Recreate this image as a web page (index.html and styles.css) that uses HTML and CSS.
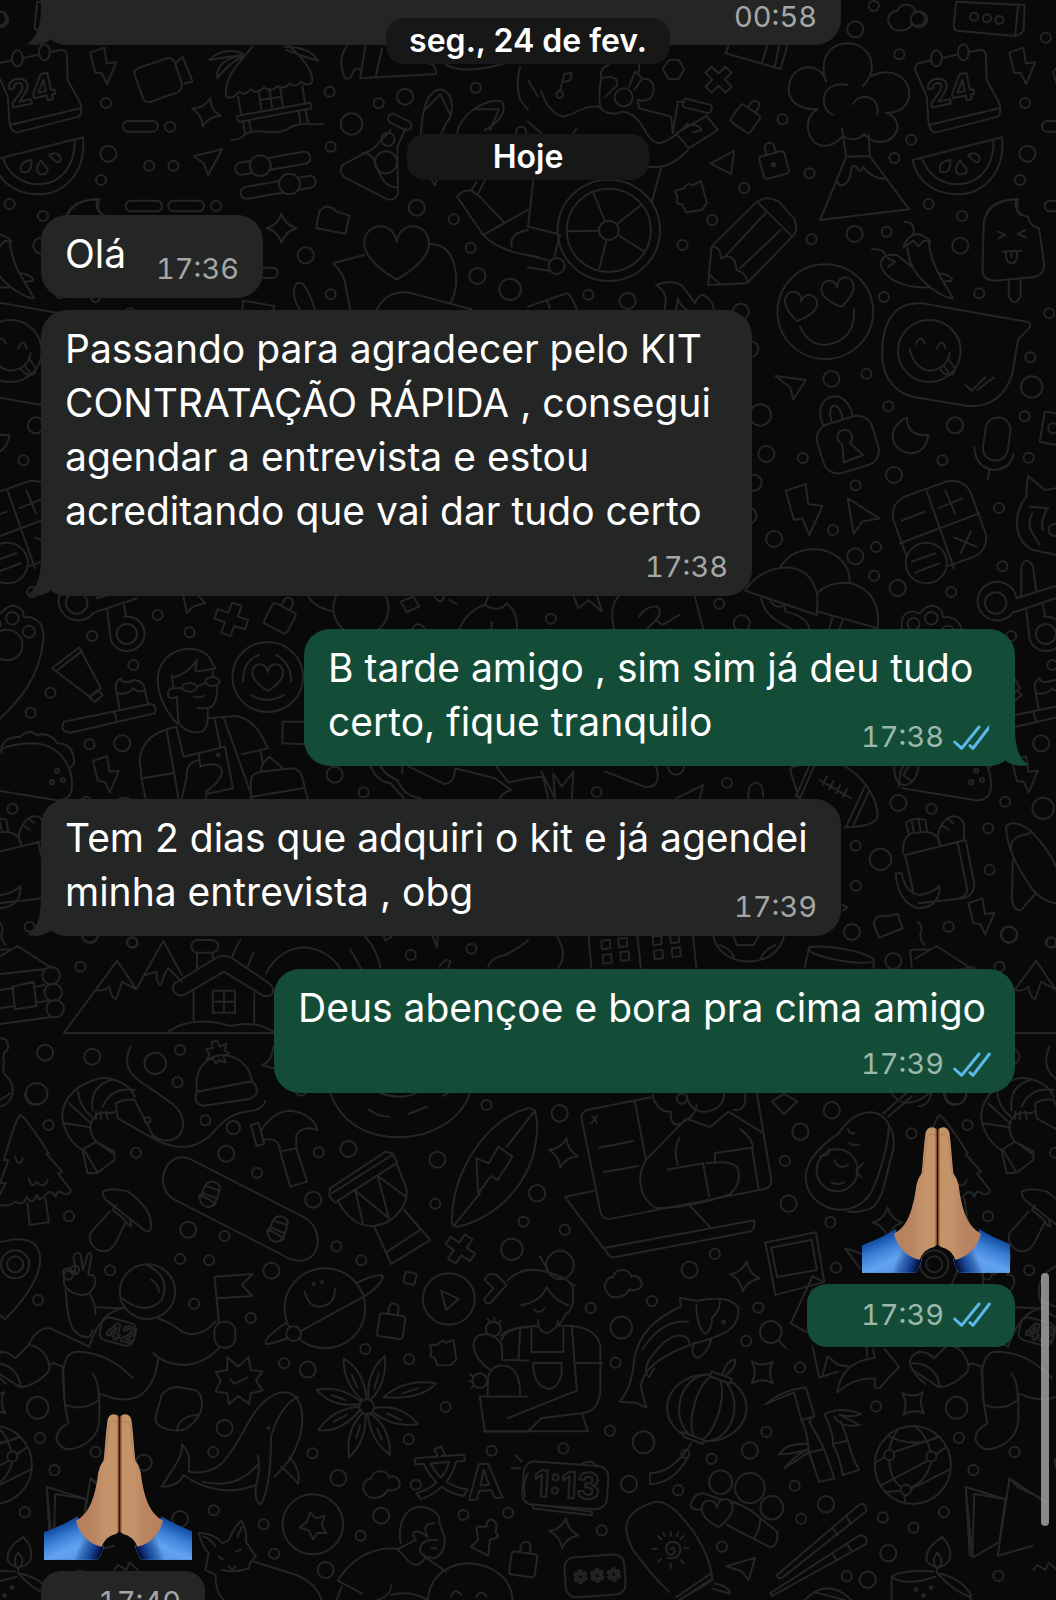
FILE: index.html
```html
<!DOCTYPE html>
<html lang="pt-BR">
<head>
<meta charset="utf-8">
<meta name="viewport" content="width=device-width, initial-scale=1">
<title>Conversa</title>
<link rel="stylesheet" href="styles.css">
</head>
<body>
<svg class="wallpaper" viewBox="0 0 1056 1600" preserveAspectRatio="xMidYMid slice" aria-hidden="true">
  <defs>
    <path id="bolt" d="M268 158L310 143L317 190L345 187L318 252L303 220L283 218Z"/>
    <path id="star" d="M0-44Q10-10 44 0Q10 10 0 44Q-10 10-44 0Q-10-10 0-44Z"/>
    <path id="cross" d="M-13-42h26v29h29v26h-29v29h-26v-29h-29v-26h29z"/>
    <path id="lock" d="M-24-22h48q8 0 8 8v42q0 8-8 8h-48q-8 0-8-8v-42q0-8 8-8M-12-22v-16a12 12 0 0 1 24 0v16"/>
    <path id="cloud" d="M-50 20C-65 0-45-25-28-22C-20-50 25-45 25-18C50-30 65 10 45 18C30 25 20 20 15 18C5 40-40 45-50 20z"/>
    <path id="heart" d="M0 42C-35 20-50 0-45-20C-38-45-5-45 0-15C5-45 38-45 45-20C50 0 35 20 0 42z"/>
    <path id="puzzle" d="M-42-8L-18-18Q-12-38 2-28L22-42L45 12L35 32L-5 44L-18 24Q-38 28-32 8Z"/>
    <path id="folder" d="M-48 8L-40-26L-22-38L0-32L10-22L48-10L36 44L-50 28Z"/>
    <g id="tile">
      <!-- calendar, hut, flask, sliders -->
      <g transform="scale(.3367 .3333)">
        <g class="s"><circle cx="315" cy="309"/><circle cx="505" cy="380"/><circle cx="300" cy="540"/><circle cx="443" cy="497"/><circle cx="515" cy="497"/><circle cx="979" cy="275"/><circle cx="1125" cy="310"/><circle cx="982" cy="440"/><circle cx="1413" cy="263"/><circle cx="642" cy="618"/><circle cx="1348" cy="658"/><circle cx="1398" cy="743"/><circle cx="982" cy="883"/><circle cx="1548" cy="395"/></g>
        <g class="m"><circle cx="322" cy="461"/><circle cx="1203" cy="290"/><circle cx="1238" cy="623"/><circle cx="908" cy="766"/><circle cx="1418" cy="828"/><circle cx="0" cy="58"/></g>
        <g class="l"><circle cx="1044" cy="372"/><circle cx="1515" cy="868"/></g>
        <use href="#bolt"/>
        <path d="M400 225Q395 210 415 203L495 175Q515 172 520 190L540 250Q542 270 525 278L445 306Q430 308 425 295ZM522 190L542 170L572 245L548 250"/>
        <rect x="365" y="363" width="104" height="32" rx="16"/><rect x="373" y="602" width="108" height="32" rx="16"/><rect x="500" y="602" width="106" height="32" rx="16"/>
        <use href="#star" transform="translate(613 337) rotate(15)"/><use href="#star" transform="translate(836 685)"/>
        <path d="M672 290Q665 250 700 200L750 140M855 135Q930 200 928 245Q915 262 895 245Q880 265 860 250Q845 270 825 258Q800 280 785 262Q760 285 745 268Q725 290 710 275Q690 300 672 290M707 290L716 345M898 258L906 310M703 348L922 308L925 325L708 366ZM722 365L728 400M740 362L746 398M888 336L892 368M908 330L914 366M688 420Q715 420 728 402C780 380 800 410 850 390Q880 368 920 372L962 373M768 272L776 328M832 262L840 318M800 266L808 322M772 300L836 290M722 160Q660 140 622 180Q680 170 722 165Q640 180 645 235Q680 190 722 168M845 140Q920 140 945 182Q900 170 850 150"/>
        <path d="M575 468L660 448L618 525L605 490Z"/>
        <rect x="697" y="472" width="226" height="36" rx="18" transform="rotate(-10 809 489)"/><circle class="solid" cx="773" cy="497" r="31"/>
        <rect x="713" y="544" width="226" height="36" rx="18" transform="rotate(-10 826 562)"/><circle class="solid" cx="860" cy="552" r="31"/>
        <rect x="1150" y="352" width="75" height="28" rx="14" transform="rotate(27 1187 366)"/>
        <path d="M1160 390L1110 445L1018 495Q1005 512 1020 530L1150 598Q1175 602 1182 580L1180 440L1205 385M1075 460C1130 450 1110 560 1178 562"/><circle cx="1152" cy="418" r="20"/><circle cx="1146" cy="487" r="33"/>
        <path d="M1250 403C1255 320 1270 270 1310 268C1350 280 1350 340 1325 370L1310 403M1262 330L1308 283L1335 340M1358 403C1360 350 1440 290 1490 305C1510 330 1480 370 1440 390M1410 328L1482 328L1455 390M1282 540L1292 556L1297 540"/>
        <path d="M1030 138Q1000 180 1025 235Q1045 240 1050 212Q1060 200 1070 210M1085 140L1070 235L1295 222Q1295 190 1270 190M1135 145L1115 232M1325 195Q1380 225 1500 190M1545 200Q1530 250 1545 300L1568 330"/>
        <path d="M200 645Q220 600 295 597Q285 630 302 645"/><use href="#folder" transform="translate(990 657)"/>
        <use href="#heart" transform="translate(1178 755) scale(2.1 2)"/>
        <path d="M1080 765L990 790Q1020 820 1025 850L1040 928M1273 732C1340 730 1355 790 1355 850Q1350 890 1338 908M1120 928Q1150 870 1215 878L1400 928M782 803L810 803Q825 805 825 820Q822 834 808 834L782 834M890 928C850 860 890 830 905 860C925 890 930 910 935 928M720 928L722 902L815 918L812 928"/>
        <path d="M1358 590Q1370 570 1400 572L1425 590L1495 665M1358 590L1435 705M1400 572L1415 545M1420 580L1440 543M1435 705Q1490 760 1600 770M1435 705L1568 630M1520 740Q1510 700 1568 690"/>
      </g>
      <g transform="translate(528) scale(.3367 .3333)">
        <g class="s"><circle cx="1027" cy="18"/><circle cx="1103" cy="163"/><circle cx="756" cy="358"/><circle cx="1138" cy="419"/><circle cx="1088" cy="474"/><circle cx="836" cy="520"/><circle cx="642" cy="564"/><circle cx="547" cy="660"/><circle cx="459" cy="735"/><circle cx="842" cy="718"/><circle cx="1065" cy="695"/><circle cx="1190" cy="612"/><circle cx="1289" cy="648"/><circle cx="1057" cy="891"/><circle cx="1340" cy="880"/><circle cx="179" cy="884"/><circle cx="1548" cy="940"/><circle cx="1538" cy="113"/></g>
        <g class="m"><circle cx="972" cy="88"/><circle cx="970" cy="702"/><circle cx="1284" cy="737"/><circle cx="296" cy="903"/><circle cx="632" cy="935"/></g>
        <path d="M1158 190L1340 150Q1358 148 1360 165L1362 240L1400 310Q1408 340 1395 350L1210 398Q1192 392 1190 370L1184 290L1152 215Q1145 198 1158 190M1190 375L1400 325"/>
        <ellipse class="solid" cx="1213" cy="175" rx="16" ry="24"/><ellipse class="solid" cx="1293" cy="157" rx="16" ry="24"/>
        <path d="M1142 480L1408 412C1418 520 1350 585 1270 583C1200 580 1155 540 1142 480ZM1170 475C1190 530 1235 555 1280 553C1340 550 1385 500 1383 420M1255 480Q1215 485 1225 515Q1255 525 1255 480M1283 482Q1262 505 1278 523Q1305 525 1303 508ZM1307 465Q1335 450 1342 478Q1335 500 1307 465"/>
        <circle cx="240" cy="691" r="152"/><circle cx="240" cy="691" r="125"/><circle cx="240" cy="691" r="29"/>
        <path d="M195 580L228 662M335 615L265 672M345 755L268 705M212 805L233 720M118 694L210 692M0 680L90 702M78 770L95 705M0 765L62 782M0 802L62 812M16 540L0 680M395 505L368 605M358 500Q420 510 475 450"/><circle cx="85" cy="798" r="24"/>
        <path d="M95 273L108 222L130 218L126 240L108 246M0 240L30 290M0 365L40 400M135 400L143 386"/><circle cx="94" cy="284" r="10"/>
        <path d="M240 195Q210 205 218 235Q250 225 262 238Q270 260 255 265L230 290M218 235Q205 300 220 330Q250 350 280 335M300 260L318 215L340 235L315 270M330 195V215M340 236Q375 235 373 270Q370 310 325 300L330 325M38 270Q60 340 105 350C140 345 160 315 215 320M285 335C350 350 340 420 390 430Q430 420 475 370M330 325L425 350L430 400L445 305L465 305M440 400L530 348L563 390L478 445ZM470 375Q510 370 515 390L490 398"/><circle cx="284" cy="292" r="27"/>
        <rect x="460" y="305" width="86" height="26" rx="8" transform="rotate(14 503 318)"/>
        <path d="M400 208L418 180H448L464 208L448 237H418Z"/>
        <use href="#cross" transform="translate(566 239) rotate(45)"/>
        <use href="#lock" transform="translate(650 350) rotate(35) scale(1.1)"/><use href="#lock" transform="translate(729 487) rotate(-15) scale(1.2)"/><circle cx="729" cy="494" r="5"/>
        <path d="M595 138L587 160L750 207L770 138M710 138L695 188M745 140L733 200M543 490L612 453L603 522L570 505Z"/>
        <path d="M885 245C860 160 910 130 950 130C1010 130 1050 200 995 258M1020 228C1080 200 1135 230 1132 290Q1120 340 1062 338Q1100 350 1097 390Q1080 430 1035 425Q1010 420 1000 402Q970 430 935 408Q910 440 875 437C825 430 815 350 860 328C790 330 770 290 775 260C780 200 850 180 880 230M905 345C860 320 870 240 950 255M965 312Q975 290 1005 290Q1045 300 1037 345M932 385L945 470L1015 468L1012 405M945 470L868 660L1132 628L1015 468M918 545Q925 565 945 550C970 520 950 490 975 500Q985 525 995 500Q1020 535 1060 537"/>
        <use href="#cloud" transform="translate(1125 55)"/>
        <path d="M1272 5L1475 15L1472 90Q1460 110 1440 107L1275 92Q1262 90 1265 70ZM1455 20L1447 105"/><circle cx="1325" cy="50" r="12"/><circle cx="1363" cy="55" r="12"/><circle cx="1400" cy="60" r="12"/>
        <use href="#puzzle" transform="translate(482 588) rotate(8) scale(1.15)"/>
        <path d="M535 855L545 740L680 605Q710 585 745 605L790 655Q805 690 785 710L650 850ZM680 605L785 710M545 740Q575 740 572 775Q615 755 620 810Q650 820 652 848M585 770L705 640M630 805L750 690M540 825L570 852"/>
        <path d="M1115 742Q1130 700 1160 703Q1185 710 1195 725L1175 722L1160 740L1145 722ZM1190 722C1195 800 1240 850 1262 895C1220 890 1130 830 1128 745M1117 665Q1150 665 1145 700M1140 800L1095 765Q1050 760 1047 795C1060 840 1120 865 1190 862M1022 748Q1055 745 1062 765M1070 775L1090 785L1070 800M1225 820Q1265 830 1258 842L1235 845"/>
        <path d="M1450 598Q1355 600 1353 680L1350 810Q1350 840 1385 842L1500 832Q1535 825 1533 795L1518 685Q1490 680 1485 650Q1440 640 1450 598M1428 842V888Q1445 925 1463 888V838M1397 695L1417 705L1397 715M1478 690L1455 702L1478 712M1410 755L1465 752M1420 755Q1418 790 1437 790Q1455 790 1452 753M1436 755v16"/>
        <use href="#heart" transform="translate(808 920) rotate(12) scale(1.05)"/><use href="#heart" transform="translate(922 877) rotate(-12) scale(1.05)"/>
        <path d="M380 855Q430 835 460 860Q490 900 495 910Q505 885 520 885Q550 900 552 928M380 855Q420 880 405 928M440 928L445 895Q455 920 470 928M0 920L115 880Q125 880 145 928M55 900L65 925"/>
      </g>
      <!-- faces, padlock, calculator, bowls -->
      <g transform="translate(528 300) scale(.3367 .3333)">
        <g class="s"><circle cx="1005" cy="221"/><circle cx="1070" cy="319"/><circle cx="816" cy="474"/><circle cx="1231" cy="481"/><circle cx="973" cy="556"/><circle cx="906" cy="690"/><circle cx="1034" cy="741"/><circle cx="1028" cy="827"/><circle cx="1399" cy="624"/><circle cx="1409" cy="799"/><circle cx="1257" cy="876"/><circle cx="1492" cy="172"/><circle cx="1475" cy="349"/><circle cx="1487" cy="473"/><circle cx="568" cy="911"/><circle cx="68" cy="956"/><circle cx="1435" cy="1008"/></g>
        <g class="m"><circle cx="901" cy="237"/><circle cx="1268" cy="376"/><circle cx="1087" cy="525"/><circle cx="972" cy="769"/><circle cx="1098" cy="864"/><circle cx="731" cy="717"/><circle cx="708" cy="462"/><circle cx="635" cy="970"/><circle cx="660" cy="147"/><circle cx="670" cy="548"/><circle cx="655" cy="647"/></g>
        <g class="l"><circle cx="690" cy="345"/><circle cx="1496" cy="261"/></g>
        <circle cx="883" cy="35" r="142"/><path d="M808 80Q830 135 885 135Q975 120 968 25"/>
        <path d="M1170 10L1480 65Q1495 68 1490 82L1455 120Q1445 180 1440 215C1420 290 1370 325 1300 317L1140 290C1070 270 1050 210 1052 150C1055 60 1090 5 1170 10"/><circle cx="1192" cy="153" r="93"/>
        <path d="M1133 148Q1150 210 1195 212Q1245 205 1252 160M1152 132Q1165 100 1178 130M1215 145Q1230 110 1240 145M1222 205Q1240 235 1265 220L1268 205L1250 180M1236 198L1250 218M1300 255L1318 272L1358 232M1335 270L1384 232"/>
        <path d="M735 228L825 240L788 298L778 262ZM876 375Q866 350 868 330C880 270 950 275 965 348M903 368Q890 330 905 318Q925 310 935 358"/>
        <rect x="865" y="358" width="170" height="152" rx="45" transform="rotate(-17 950 434)"/>
        <path d="M933 432L938 487L995 465L955 428A22 22 0 1 0 933 432"/>
        <path d="M1125 352Q1125 410 1190 405Q1180 460 1135 460C1070 450 1065 380 1125 352M1325 440Q1330 505 1385 510Q1435 505 1442 462M1370 512L1366 538"/><rect x="1355" y="352" width="74" height="130" rx="37" transform="rotate(8 1392 418)"/>
        <path d="M765 572L825 552L832 612L875 618L835 705L815 655L790 660ZM950 595L1043 655L992 665L967 702Z"/>
        <rect x="1100" y="560" width="244" height="240" rx="60" transform="rotate(-20 1222 680)"/>
        <path d="M1183 570L1265 805M1105 730L1340 640M1218 625L1290 595M1240 572L1268 640M1110 662L1180 635M1265 712L1332 740M1315 695L1285 760"/><circle class="solid" cx="1183" cy="789" r="61"/><path d="M1140 785L1210 760M1150 818L1222 790"/>
        <path d="M750 800Q780 750 850 747C920 750 960 800 955 850M645 872C690 790 850 760 860 900L858 945ZM858 880Q900 840 960 850C1030 870 1045 930 1038 985L862 935M693 895Q700 950 780 985M720 905Q740 930 760 915L765 935Q830 950 835 985M905 950L895 985M935 960L925 985"/>
        <circle cx="1389" cy="909" r="32"/><path d="M1450 890A58 58 0 1 0 1440 938L1568 895M1450 895L1568 858M1480 930L1490 1020A52 52 0 1 0 1530 950M1530 915L1535 950M1465 888V800Q1480 765 1500 800L1510 876"/><circle cx="1538" cy="1002" r="30"/>
        <path d="M1112 1000Q1100 930 1150 935Q1160 945 1168 935Q1200 900 1230 935Q1230 960 1245 950Q1295 960 1290 1020C1280 1130 1220 1200 1160 1258M1112 1000Q1080 1100 1160 1258"/><circle cx="1198" cy="955" r="19"/><circle cx="1145" cy="972" r="18"/><circle cx="1247" cy="995" r="18"/><circle cx="1182" cy="1035" r="46"/>
        <path d="M1485 528L1535 570L1568 565M1485 528Q1480 560 1480 590C1440 640 1440 720 1500 750L1568 765M1490 620L1545 625M1498 640Q1480 670 1498 700L1520 735M1540 630Q1520 670 1530 690M1535 335L1568 340M1535 335L1520 425L1568 435"/><circle cx="1564" cy="690" r="18"/><circle cx="1560" cy="385" r="15"/>
        <path d="M135 888L150 925L180 900L220 935L205 888M255 985Q240 920 270 888M330 950Q350 915 385 920Q400 940 380 960L355 985M380 960L400 975L450 945M495 888L520 985"/>
      </g>
      <g transform="translate(0 300) scale(.3367 .3333)">
        <g class="s"><circle cx="468" cy="945"/><circle cx="563" cy="997"/><circle cx="396" cy="1095"/><circle cx="150" cy="1178"/></g>
        <path d="M545 888L555 940Q570 915 610 910L590 888M915 888Q930 920 990 935M1190 905L1228 890L1245 920L1208 936ZM1365 985Q1390 930 1440 915L1450 890M1440 915Q1480 940 1505 910Q1540 940 1535 985M1460 965v20M1225 985Q1240 960 1262 985M1290 888Q1310 920 1320 888M1335 900L1355 912"/><circle cx="1072" cy="925" r="82"/>
        <use href="#cross" transform="translate(687 958) rotate(20) scale(1.15)"/><use href="#lock" transform="translate(835 948) rotate(28) scale(1.2)"/>
      </g>
      <!-- woman with phone, taco, picnic bag -->
      <g transform="translate(0 600) scale(.3367 .3333)">
        <g class="s"><circle cx="91" cy="338"/><circle cx="266" cy="433"/><circle cx="37" cy="626"/><circle cx="1080" cy="577"/><circle cx="394" cy="1028"/><circle cx="239" cy="1100"/><circle cx="88" cy="980"/><circle cx="1220" cy="1065"/><circle cx="1400" cy="1046"/></g>
        <g class="m"><circle cx="363" cy="430"/><circle cx="994" cy="524"/><circle cx="268" cy="1005"/></g>
        <path d="M155 205L235 142L300 265L268 292ZM165 215L245 152M265 292L290 270L305 285L282 306ZM355 325L345 270Q340 245 358 235Q362 255 400 240Q430 245 430 270L440 315M348 280Q380 285 395 265Q410 280 432 270M190 365L445 312Q468 315 460 340L210 398Q175 395 190 365M340 335L348 366"/>
        <path d="M525 370C480 320 460 260 472 210C500 140 580 130 620 170L640 205Q600 215 580 212L585 180Q560 220 510 235M510 225L515 265Q495 265 500 290Q510 300 525 290L530 370Q560 405 600 395Q620 385 617 325Q645 320 645 260M632 215V232M515 265H542M585 260L610 248M575 290Q590 295 605 288M587 325H617"/><ellipse cx="563" cy="262" rx="22" ry="13"/><ellipse cx="631" cy="245" rx="21" ry="13"/>
        <path d="M525 380Q420 400 415 480L420 535L432 595M495 390L530 595M425 535L512 520M525 385L545 470L590 460M617 355L700 348Q760 355 795 445L718 463M665 355L750 595M638 360L655 440M590 460L668 440L692 565L612 582M590 460L595 500Q650 480 660 515Q655 545 612 575V595M590 480Q550 490 555 530L540 595"/><circle cx="648" cy="465" r="4"/>
        <circle cx="795" cy="231" r="105"/><use href="#heart" x="795" y="231"/><path d="M722 245Q722 180 770 165M820 165Q865 190 865 245M745 285Q790 315 845 285"/>
        <path d="M905 365H840L838 430L905 433M745 595V545Q745 520 775 515L870 505Q895 510 900 540L913 595M750 590L900 565M775 515Q775 490 800 470L840 505M775 455L780 490"/>
        <path d="M5 440Q15 410 60 410Q85 385 110 405Q150 395 170 430Q220 430 220 490L210 502M-60 560Q-60 430 100 430C180 435 220 500 213 570Q205 605 165 600L-50 565M5 440V460"/><circle cx="170" cy="512" r="6"/><circle cx="155" cy="547" r="6"/><circle cx="187" cy="540" r="6"/>
        <use href="#bolt" x="8" y="325"/>
        <path d="M1100 498Q1120 545 1160 550L1200 595M1130 500Q1150 530 1180 540Q1200 590 1250 595M1195 500V520M1215 500L1320 552Q1350 550 1352 505L1470 535L1518 570Q1490 580 1485 595M1475 500L1510 548L1568 535"/>
        <path d="M1140 1010L1145 1022L1165 1008M1285 1008L1298 1044L1300 1008M1085 1010Q1120 1050 1130 1103"/>
      </g>
      <g transform="translate(528 600) scale(.3367 .3333)">
        <g class="s"><circle cx="591" cy="548"/><circle cx="204" cy="576"/><circle cx="1417" cy="605"/><circle cx="1367" cy="685"/><circle cx="973" cy="737"/><circle cx="1371" cy="809"/><circle cx="974" cy="857"/><circle cx="1553" cy="1027"/></g>
        <g class="m"><circle cx="1100" cy="609"/><circle cx="1428" cy="1003"/><circle cx="962" cy="996"/><circle cx="1085" cy="1083"/><circle cx="440" cy="500"/></g>
        <g class="l"><circle cx="1047" cy="778"/><circle cx="1530" cy="625"/></g>
        <path d="M1120 765L1300 720L1325 850Q1325 890 1290 895L1160 910M1120 765L1145 880M1275 725L1305 870Q1300 890 1280 895M1115 762Q1110 710 1140 700L1180 695Q1220 700 1225 735M1130 700L1122 668Q1150 650 1180 660L1185 692M1140 665l6 32M1160 660l6 32M1225 735Q1205 710 1235 665Q1270 630 1295 670V722M1230 675l20 15M1245 655l18 14M1092 820H1110Q1120 880 1165 885Q1200 880 1222 858Q1225 920 1160 925Q1100 910 1092 820"/>
        <path d="M780 515Q775 500 800 498M780 515L805 595M940 498C1010 540 1040 610 1038 650Q1030 680 940 682M850 498L808 595M835 498L795 590M1000 560L945 680M1012 575L965 680M865 540L960 595M875 555l12-25M895 568l12-25M915 580l12-25M935 592l12-25"/>
        <use href="#bolt" x="1040" y="752"/><use href="#folder" transform="translate(1067 970) rotate(-32) scale(.85)"/>
        <path d="M1158 965Q1175 980 1165 1005Q1165 1020 1177 1035M1420 680Q1440 655 1490 690C1540 740 1560 780 1568 800M1420 680Q1420 760 1500 870Q1530 905 1568 910M1435 750Q1430 710 1475 705L1490 700M1440 780L1437 900Q1445 935 1465 930L1508 880"/>
        <path d="M180 1008L188 1103M325 1008L335 1103M490 1008L500 1103M218 1022l25-3 2 26-25 3zM268 1016l25-3 2 26-25 3zM222 1065l25-3 2 26-25 3zM274 1057l25-3 2 26-25 3zM370 1010l25-3 2 26-25 3zM422 1004l25-3 2 26-25 3zM374 1052l25-3 2 26-25 3zM427 1045l25-3 2 26-25 3zM550 1008C570 1110 740 1110 760 1008M610 1008L620 1035H670L685 1008M570 1035Q610 1050 612 1078M690 1078Q700 1050 735 1035M822 1103L835 1040M1028 1085L1025 1103M85 1008Q120 1060 90 1103M1140 1103L1135 1050L1190 1048M935 915L950 923L935 932"/><ellipse cx="930" cy="1064" rx="98" ry="18" transform="rotate(10 930 1064)"/>
        <path d="M0 535L45 530L60 595M40 515L80 595M80 595L75 520L100 560L135 515L130 595M230 515L350 562Q390 560 385 520L380 500M440 595L520 555L510 595M655 595Q650 550 680 548Q700 555 698 590M1088 498Q1085 540 1110 555Q1150 560 1160 500M1130 500L1115 525L1140 545"/>
      </g>
      <!-- mountains, snowboard, astronaut, planet -->
      <g transform="translate(0 940) scale(.3367 .3333)">
        <g class="s"><circle cx="535" cy="330"/><circle cx="527" cy="427"/><circle cx="610" cy="541"/><circle cx="144" cy="555"/><circle cx="404" cy="638"/><circle cx="205" cy="829"/><circle cx="763" cy="698"/><circle cx="947" cy="637"/><circle cx="667" cy="888"/><circle cx="535" cy="957"/><circle cx="621" cy="961"/><circle cx="327" cy="991"/><circle cx="577" cy="1091"/><circle cx="113" cy="1080"/><circle cx="745" cy="1134"/><circle cx="999" cy="919"/><circle cx="1073" cy="961"/><circle cx="1293" cy="791"/><circle cx="1445" cy="495"/><circle cx="1085" cy="1227"/><circle cx="1215" cy="1258"/><circle cx="844" cy="1270"/><circle cx="1555" cy="845"/></g>
        <g class="m"><circle cx="134" cy="338"/><circle cx="274" cy="350"/><circle cx="672" cy="641"/><circle cx="1035" cy="627"/><circle cx="1299" cy="659"/><circle cx="930" cy="779"/><circle cx="559" cy="869"/><circle cx="806" cy="992"/><circle cx="914" cy="1289"/></g>
        <g class="l"><circle cx="461" cy="370"/><circle cx="109" cy="461"/><circle cx="1520" cy="928"/></g>
        <path d="M-10 55L52 18L155 85M-20 104L130 88M0 150L40 145M105 140L132 135M0 205L45 198M0 252L150 232M37 140L100 125L108 198L45 208ZM105 188L140 183M0 295Q30 295 22 330Q5 340 12 370Q5 400 20 410Q50 440 30 480Q15 500 0 498"/><circle cx="152" cy="107" r="26"/><circle cx="158" cy="157" r="26"/><circle cx="164" cy="206" r="26"/>
        <path d="M815 279H190L348 62L405 148L485 2L540 105M285 150Q310 155 325 140Q330 175 345 178Q355 150 362 125L405 148M432 105L465 95Q465 135 478 135Q488 100 500 85L540 125"/>
        <path d="M518 130L640 55Q665 40 690 55L800 130Q820 150 805 165Q790 175 770 160L665 95L555 160Q530 175 518 155Q508 145 518 130ZM575 155V240M755 160V250M632 152h66v66h-66zM665 152v66M632 185h66M585 38V85M632 38V55M500 275Q570 225 685 258Q760 240 812 275"/><rect x="568" y="0" width="80" height="38" rx="19"/>
        <path d="M690 50Q700 20 715 0M735 80L752 40M790 100Q830 25 905 22Q975 30 1010 85M1040 28L1072 85M1305 80Q1325 50 1338 65L1330 85M1450 80Q1460 50 1500 45Q1550 20 1568 0"/>
        <path d="M388 320C360 380 390 410 440 440L510 490C560 530 550 590 510 600Q480 605 460 590M400 480L460 598L350 535Q345 515 345 490Q370 475 400 480M400 470C380 420 310 405 280 420C190 450 170 520 195 570Q210 610 245 630L285 605Q260 570 272 545Q285 510 330 520L345 515M400 450Q330 440 305 500M330 420Q265 440 275 510M232 455Q235 500 272 530M205 490L270 550M190 550L270 562M245 630L260 700L290 698L340 660V635L285 605M250 630L290 698M285 605L335 640M285 515v22M300 515v22M315 515l5 22M460 598C540 640 600 620 640 570Q680 520 730 515Q785 510 788 482"/><circle cx="438" cy="540" r="9"/><circle cx="693" cy="563" r="20"/>
        <path d="M585 455C575 380 620 345 665 345C720 350 745 390 748 425M585 455L740 425Q765 425 762 460Q755 475 735 478L605 497Q580 495 580 470ZM645 302l8 18 20-10-6 22 15 8-18 8 6 20-20-8-8 12-8-16-20 4 8-18-10-14 20-4-4-18zM812 320Q808 365 778 375L812 385"/>
        <path d="M60 525Q75 530 145 640L138 642L185 695L172 700L210 750Q210 765 190 762Q170 745 165 770Q150 745 135 765Q115 790 110 765Q95 800 80 770Q70 800 45 785Q30 800 10 795L-20 798M60 525Q45 540 12 660L25 660L0 730L18 730L-20 798M82 790L88 855L145 847L135 775M45 650Q55 685 68 655M85 715Q95 750 108 725Q130 750 142 720"/>
        <path d="M305 755Q330 740 380 755C430 790 455 830 447 870Q440 880 425 868L325 788Q305 775 305 755M345 795L335 810L345 818Q375 840 380 855L390 860L385 835M325 815L268 880Q260 910 290 930Q325 945 345 905L372 850"/>
        <path d="M580 665L900 830C960 860 960 960 890 962Q860 962 830 940L520 780C460 750 480 650 545 652Q565 655 580 665"/>
        <path id="binding" d="M600 770Q605 720 635 725Q660 735 650 755Q640 800 620 802Q595 800 592 770ZM612 738L652 752M605 760L645 776M602 768L640 790M590 768L600 760M632 798L642 792"/><use href="#binding" x="202" y="104"/>
        <path d="M745 555L768 548L785 612L762 618ZM775 572Q810 515 860 512C910 515 935 545 943 570Q900 555 880 585V625L832 635Q830 590 785 600M832 635L862 740L912 725L880 625"/>
        <path d="M980 745L1145 635L1165 640L1180 668L995 788L978 768ZM985 760L1165 645M1005 785C1040 850 1080 860 1110 858C1180 850 1220 780 1205 740L1178 672M1055 752L1078 850M1055 752L1155 835L1122 708L1205 770M1112 860L1162 972L1278 900L1200 810M1150 935L1250 868"/>
        <path d="M980 460C1020 560 1100 592 1190 592C1280 590 1370 540 1395 460M1095 508Q1120 530 1155 530M1212 522L1270 500M1130 460Q1190 480 1235 460M1315 468L1330 460M880 460Q893 475 908 460"/>
        <path d="M1568 505C1440 540 1340 700 1342 850Q1350 865 1370 858C1500 820 1595 700 1595 560Q1595 500 1568 505M1350 855L1425 760M1590 510L1505 620M1415 655L1452 670L1480 620L1522 650L1478 720L1458 708L1420 760Z"/>
        <use href="#cross" transform="translate(1367 927) rotate(35) scale(1.05)"/>
        <path d="M-10 910Q60 885 100 910C140 950 120 1030 15 1138L-30 1100M-220 925L-175 985M-220 925L-160 945"/><circle cx="45" cy="973" r="42"/><circle cx="45" cy="973" r="24"/>
        <path d="M190 1010Q180 985 205 985L225 1000L218 950Q228 930 240 945L246 990L262 940Q275 935 270 960L262 1005Q285 1000 283 1030Q270 1070 240 1065Q200 1060 190 1030ZM195 1050C200 1140 210 1190 260 1192Q270 1190 275 1170M265 1060Q285 1090 283 1122"/><circle cx="203" cy="1006" r="13"/><circle cx="222" cy="990" r="13"/>
        <circle cx="438" cy="1055" r="82"/><path d="M362 1075Q430 1130 480 1080Q510 1010 435 975M448 1018Q470 1030 472 1055M285 1102Q330 1105 370 1105Q300 1110 265 1220L150 1165Q110 1160 85 1215L45 1255Q20 1230 0 1238M470 1135Q520 1155 540 1175Q590 1200 640 1145M85 1215Q130 1220 145 1270Q150 1290 140 1300Q100 1340 60 1342L-20 1290M-20 1270Q50 1270 62 1340M145 1275L160 1270L185 1280M190 1380L188 1290Q195 1235 230 1235Q320 1235 395 1315M275 1300Q295 1330 293 1380M455 1240Q490 1275 550 1275Q610 1270 655 1220M470 1255Q460 1340 410 1370Q360 1390 300 1362M650 1145L637 1010L750 1002L718 1035L750 1068L645 1075"/>
        <rect x="298" y="1140" width="104" height="70" rx="22" transform="rotate(15 350 1175)"/><rect x="637" y="1145" width="62" height="78" rx="28"/>
        <circle cx="965" cy="1105" r="120"/><path d="M1060 1028Q1130 995 1138 1010Q1130 1040 1080 1070L880 1180M848 1150Q780 1195 790 1212Q800 1215 855 1195M905 1055Q915 1100 950 1100Q995 1095 995 1048"/><circle class="solid" cx="872" cy="1181" r="22"/><circle cx="932" cy="1032" r="3"/><circle cx="956" cy="1027" r="3"/>
        <rect x="1201" y="998" width="34" height="34" rx="6" transform="rotate(12 1218 1014)"/><circle cx="1333" cy="1077" r="77"/><path d="M1310 1052L1362 1077L1325 1110ZM1440 1020Q1450 995 1475 1005L1505 1035L1455 1090Q1435 1090 1440 1075L1465 1045Z"/>
        <use href="#lock" transform="translate(1163 1150) rotate(8) scale(1.2)"/><use href="#puzzle" transform="translate(1315 1235) rotate(15)"/>
        <circle cx="1465" cy="1167" r="22"/><circle cx="1425" cy="1322" r="22"/><path d="M1455 1145l-6-8M1468 1143v-10M1480 1150l8-8M1405 1310l-8-6M1402 1325h-8M1408 1338l-8 6M1455 1290C1400 1250 1395 1200 1425 1185Q1470 1175 1490 1215L1492 1260L1568 1262M1490 1200Q1500 1165 1568 1162M1545 1165L1540 1260M1448 1365L1450 1310Q1460 1275 1495 1277Q1545 1280 1545 1365M1440 1475L1425 1370H1568M1440 1475H1568"/>
        <path d="M675 1252L708 1280L738 1252L745 1290L780 1295L760 1322L780 1352L745 1360L740 1392L708 1368L680 1392L675 1360L640 1355L655 1322L640 1297L675 1290ZM685 1318l10 14 38-18"/>
      </g>
      <!-- laptop, avocado, koi, lantern, globe -->
      <g transform="translate(528 1060) scale(.3367 .3444)">
        <g class="s"><circle cx="109" cy="493"/><circle cx="555" cy="563"/><circle cx="368" cy="700"/><circle cx="186" cy="720"/><circle cx="260" cy="879"/><circle cx="243" cy="1076"/><circle cx="105" cy="1128"/><circle cx="763" cy="293"/><circle cx="898" cy="471"/><circle cx="915" cy="603"/><circle cx="684" cy="719"/><circle cx="648" cy="816"/><circle cx="808" cy="893"/><circle cx="1034" cy="1006"/><circle cx="708" cy="1080"/><circle cx="545" cy="1158"/><circle cx="446" cy="1249"/><circle cx="792" cy="1236"/><circle cx="811" cy="1332"/><circle cx="1054" cy="1328"/><circle cx="1145" cy="1358"/><circle cx="1235" cy="1313"/><circle cx="1280" cy="1097"/><circle cx="1323" cy="1191"/><circle cx="1445" cy="1138"/><circle cx="1397" cy="1498"/><circle cx="947" cy="1499"/><circle cx="576" cy="1413"/><circle cx="219" cy="1366"/><circle cx="1139" cy="213"/></g>
        <g class="m"><circle cx="94" cy="155"/><circle cx="480" cy="609"/><circle cx="27" cy="387"/><circle cx="300" cy="1231"/><circle cx="659" cy="1134"/><circle cx="885" cy="1290"/><circle cx="1070" cy="1432"/><circle cx="1009" cy="1509"/><circle cx="809" cy="208"/><circle cx="774" cy="417"/><circle cx="902" cy="146"/></g>
        <g class="l"><circle cx="277" cy="777"/><circle cx="343" cy="1110"/><circle cx="1273" cy="1010"/></g>
        <path d="M365 108L175 145Q155 155 160 175L215 440Q220 462 240 462L700 375Q725 370 722 345L680 98M318 122L350 290M190 162l14 20M206 160l-18 24M210 255L312 235M225 325L328 308M195 380L110 398L235 560Q240 575 260 572L660 498Q675 490 672 465L230 545M480 422L540 485"/>
        <path d="M470 170L350 290C320 340 330 400 380 430M450 225Q430 260 445 305M415 318L520 300L538 395M380 430Q480 430 600 390Q640 350 620 310Q600 290 530 300M555 300V270L665 255L685 375M630 200Q670 230 668 260M470 170L540 195L595 150L695 210M370 100Q380 150 425 150Q420 185 445 188Q500 165 500 130M470 100Q480 150 525 150Q580 145 583 98M610 145Q650 150 645 98"/><circle cx="457" cy="112" r="15"/>
        <path d="M1010 152C960 160 940 190 920 215C850 260 820 310 825 350C830 400 880 435 930 435C1010 430 1030 370 1045 320Q1070 250 1072 190Q1055 150 1010 152M1072 190Q1090 210 1085 260C1060 340 1060 400 1020 430Q980 445 950 440M900 355Q920 365 938 355M910 290Q920 320 950 305M950 200Q955 215 970 213M955 240Q960 250 985 245M868 280L890 275L895 258M975 320L995 300M975 325L990 340M1055 155L1125 95M1070 165L1140 105M1080 98Q1120 150 1190 98M1235 98Q1240 130 1270 130Q1300 125 1302 98"/><circle cx="918" cy="320" r="61"/>
        <path d="M705 530L855 500L880 645L735 682ZM722 545L842 522L858 610L740 630ZM725 120L760 98L800 120L760 158ZM880 645L845 628L780 765L828 790M845 665L830 700M845 830L865 922L920 905M875 915L890 860L920 885L950 890M918 965Q970 920 1030 925V950Q1035 955 1045 952L1102 890L1060 840M918 965C930 890 980 870 1030 865L1025 840M1005 835L1008 860"/>
        <use href="#star" transform="translate(105 270) rotate(12)"/><use href="#star" transform="translate(644 628) rotate(8)"/><use href="#star" transform="translate(1068 472)"/><use href="#star" transform="translate(696 907) rotate(45)"/><use href="#star" transform="translate(1144 997) rotate(42)"/><use href="#star" transform="translate(107 1374) rotate(8)"/><use href="#cloud" transform="translate(283 650) rotate(-5)"/>
        <path d="M450 690L500 700Q600 680 625 720C630 790 560 800 540 810C420 840 340 890 335 950L352 1010L320 995L272 992Q310 950 315 870C330 790 380 750 455 715ZM500 710C500 750 510 790 530 795Q550 770 545 750Q570 730 570 700M495 820Q480 850 500 865Q530 860 545 808M475 760Q400 750 340 840M375 895L360 920Q340 910 360 870Q410 800 450 800Q475 800 480 822"/><circle cx="581" cy="761" r="4"/>
        <circle cx="95" cy="595" r="41"/><path d="M35 570L60 610M-60 640Q-20 600 40 612Q100 625 130 650Q145 720 110 740Q100 765 85 770M55 660Q40 700-20 712M55 660Q80 700 120 712M20 725Q35 740 50 720M125 650L140 656M30 755V770Q50 815 88 770V755M90 772Q200 765 215 830V950Q215 1020 160 1025L40 1040L0 1078H178L160 1025M10 775V848H105V778M130 775L145 960L-60 1040M145 880H220M15 880H100V910Q90 955 60 955Q15 945 15 880M-130 1078H0M30 772Q-60 775-80 800"/>
        <circle cx="721" cy="790" r="32"/><path d="M745 815L768 838"/>
        <ellipse cx="531" cy="1010" rx="118" ry="97"/><ellipse cx="531" cy="1010" rx="82" ry="97" transform="rotate(8 531 1010)"/><ellipse cx="531" cy="1010" rx="38" ry="97" transform="rotate(16 531 1010)"/>
        <path class="solid" d="M540 918L600 940L605 925L545 904ZM458 1080L525 1105L520 1115L462 1094Z"/><path d="M578 912Q590 870 615 870Q620 890 588 915M485 1112L470 1135Q420 1200 362 1200V1232Q430 1230 475 1155"/><circle cx="467" cy="1144" r="12"/>
        <path d="M705 1000Q750 960 825 950L850 1030L835 1050Q860 1090 880 1130L910 1215L865 1225L835 1140Q830 1080 812 1045Q800 1000 790 965ZM812 1045L850 1035M832 1140L880 1130M745 1145Q770 1110 832 1115M745 1145Q790 1145 832 1130Q790 1150 762 1185L832 1140M880 1028Q930 1005 988 1028Q960 1040 925 1030L985 1060Q930 1070 910 1035M880 1028Q910 1090 905 1115Q925 1150 935 1205L983 1190Q960 1150 950 1105L930 1050M905 1115L950 1105"/>
        <circle cx="1143" cy="1176" r="113"/><path d="M1070 1092Q1150 1130 1220 1092M1030 1170L1060 1152M1086 1138L1220 1095M1073 1160Q1075 1220 1110 1240M1048 1235L1185 1165M1212 1145L1240 1125M1198 1165Q1185 1220 1135 1243M1110 1250L1060 1255M1138 1245L1250 1190M1150 1064Q1185 1090 1195 1138M1100 1070Q1075 1110 1073 1132M1118 1262L1120 1288"/><circle class="solid" cx="1073" cy="1147" r="15"/><circle class="solid" cx="1198" cy="1151" r="15"/><circle class="solid" cx="1122" cy="1248" r="15"/>
        <path d="M1165 845Q1130 860 1135 885Q1150 920 1180 940M1300 1240L1418 1275L1400 1400L1320 1445ZM1325 1260L1418 1275M1300 1240L1312 1440M1325 1260L1320 1445M1430 1215L1395 1440L1500 1410M1430 1215L1545 1290M1430 1215L1455 1240L1540 1280"/>
        <path d="M1230 1385Q1265 1420 1250 1455Q1215 1490 1185 1455Q1175 1420 1230 1385M1215 1430Q1240 1455 1215 1478Q1195 1455 1215 1430M1215 1475V1490Q1260 1540 1315 1560M1215 1490Q1280 1500 1315 1550V1568M1080 1500Q1110 1480 1205 1485M1080 1500V1568M1080 1500Q1120 1530 1210 1500"/><circle cx="1152" cy="1538" r="4"/><circle cx="1197" cy="1532" r="4"/><circle cx="1175" cy="1555" r="4"/>
        <rect x="-15" y="1172" width="252" height="126" rx="32" transform="rotate(4 110 1235)"/><path d="M15 1290L190 1312V1322L15 1302ZM155 1175Q190 1155 205 1182"/>
        <path d="M300 1330Q320 1300 370 1285Q400 1275 440 1310C500 1370 540 1440 548 1510L450 1568M300 1330Q280 1360 310 1420Q370 1500 420 1545M440 1560L545 1490M450 1568L548 1505M555 1520Q600 1530 600 1550L548 1535M424 1420q8-10 12 4q-4 18-20 10q-14-20 6-34q34-4 30 28q-10 24-36 18M424 1370v12M424 1462v14M370 1420h12M464 1418h12M386 1382l9 9M454 1452l9 9M462 1382l-9 9M386 1458l9-9M402 1372l4 10M446 1372l-4 10"/>
        <circle cx="572" cy="1226" r="34"/><circle cx="659" cy="1243" r="44"/><circle cx="724" cy="1300" r="34"/><path d="M530 1305Q480 1310 483 1290Q490 1260 520 1258L570 1275Q640 1285 690 1330L740 1370Q745 1410 720 1415L590 1350M690 1330Q690 1365 670 1390"/><use class="solid" href="#heart" x="563" y="1315" transform="rotate(-5 563 1315)"/>
        <path d="M590 1470L675 1445L655 1510L635 1485ZM740 1495L985 1290Q1005 1285 1005 1310L755 1503Q742 1508 740 1495ZM720 1548L985 1380Q1010 1380 1005 1405L725 1556ZM905 1360l15 20M945 1325l15 22M905 1435l12 18M948 1405l12 20M822 1568Q890 1500 960 1568M850 1545L940 1568"/>
        <rect x="110" y="1440" width="178" height="116" rx="30" transform="rotate(-4 198 1497)"/>
      </g>
      <!-- whale, anise, coin, fox, diver -->
      <g transform="translate(0 1340) scale(.3367 .3333)">
        <g class="s"><circle cx="633" cy="336"/><circle cx="635" cy="511"/><circle cx="783" cy="553"/><circle cx="814" cy="641"/><circle cx="1071" cy="587"/><circle cx="1376" cy="525"/><circle cx="1235" cy="434"/><circle cx="1214" cy="298"/><circle cx="1323" cy="201"/><circle cx="1460" cy="332"/><circle cx="1509" cy="518"/><circle cx="928" cy="340"/></g>
        <g class="m"><circle cx="667" cy="264"/><circle cx="1005" cy="414"/><circle cx="1132" cy="527"/><circle cx="967" cy="690"/><circle cx="535" cy="537"/><circle cx="427" cy="368"/></g>
        <path d="M185 80L193 195L203 250Q165 270 168 300Q180 330 210 328Q290 310 295 240V160M193 195Q250 215 293 180M480 165Q500 140 530 142L580 150Q600 160 600 195Q600 230 555 265Q530 280 480 262Q455 250 465 220ZM525 272Q530 230 585 225"/>
        <path d="M480 440L515 385Q545 340 540 312Q570 340 560 395C650 410 680 350 720 280C760 200 800 155 850 157C910 170 905 260 880 320Q860 370 815 410M480 440Q530 440 545 405C620 460 700 460 760 435M600 425Q700 450 765 375M765 345Q775 380 760 440Q755 490 775 492Q805 440 805 290Q830 200 885 170M835 380Q870 410 885 432Q895 390 860 352"/><circle cx="797" cy="264" r="3"/>
        <circle cx="1089" cy="200" r="22"/><path d="M1075 180Q1020 130 1020 55Q1080 90 1088 175M1095 178Q1085 100 1143 48Q1150 130 1100 180M1140 172Q1200 115 1295 130Q1250 180 1140 172M1110 205Q1190 190 1240 252Q1170 265 1105 215M1098 220Q1160 260 1158 345Q1100 300 1092 222M1085 222Q1090 300 1037 352Q1025 270 1078 218M1070 210Q1010 280 945 270Q990 205 1068 200M1068 192Q990 205 940 150Q1010 135 1072 185M1045 105L1062 145M1125 100L1112 145M1195 160L1240 145M1150 220L1190 240M1120 265L1135 300M1070 255L1058 295M1030 225L990 245M985 165L1025 180"/>
        <circle cx="929" cy="553" r="90"/><path d="M921 517L938 535L965 528L955 555L970 580L942 578L930 598L918 572L890 562L912 545Z"/>
        <path d="M590 578Q640 580 660 610L680 600Q695 560 718 542Q735 580 730 605L760 650Q740 665 740 685Q700 700 660 690M590 578Q600 620 620 640L610 690L640 705Q640 760 665 780M755 665L880 705Q940 730 955 780M605 590Q630 600 640 620M705 590Q715 570 718 560M650 650l12 8M700 635l16-6M680 680q10 15 20 0"/>
        <path d="M1003 722L1075 760M1003 722Q1060 630 1160 625L1185 628M1000 780L1015 740M1120 780Q1160 770 1162 735M1162 765Q1220 750 1270 780M1190 610C1180 560 1200 500 1250 500Q1310 510 1305 550L1320 590Q1325 640 1290 655L1265 650Q1240 690 1215 665L1180 628L1235 600M1235 600Q1215 570 1245 575L1270 590Q1250 550 1290 550M1275 600Q1240 610 1250 640L1265 650M1300 600L1275 600M1280 625h16M1268 655L1325 695M1270 780C1280 690 1350 670 1395 670C1470 675 1520 720 1522 780M1340 770Q1350 740 1370 765M1415 770Q1430 745 1445 770"/>
        <path d="M1445 560Q1445 535 1465 540Q1480 550 1472 575L1480 590L1455 600L1450 648L1398 620L1420 600L1415 560Z"/><use href="#lock" transform="translate(1555 665) rotate(8) scale(1.2)"/><use href="#cloud" transform="translate(1133 434) rotate(-8)"/>
        <path d="M340 690L350 675L375 690L385 668L410 690M1520 385H1545M1530 345L1550 365M1568 400Q1550 430 1560 470"/>
      </g>
      <text x="930" y="108" font-size="37" transform="rotate(-12 930 108)">24</text>
      <text x="105" y="1337" font-size="22" transform="rotate(14 105 1337)">42</text>
      <text x="533" y="1496" font-size="36" transform="rotate(3 533 1496)">1:13</text>
      <text x="573" y="1593" font-size="30" transform="rotate(-4 573 1593)">***</text>
      <text x="415" y="1495" font-size="54" transform="rotate(-4 415 1495)">文</text>
      <text x="468" y="1500" font-size="48" transform="rotate(-4 468 1500)">A</text>
    </g>
  </defs>
  <use href="#tile"/>
  <use href="#tile" x="-919"/>
  <use href="#tile" x="919"/>
</svg>

<svg class="sprite" width="0" height="0" aria-hidden="true">
  <defs>
    <linearGradient id="skin" gradientUnits="userSpaceOnUse" x1="165" y1="0" x2="292" y2="0">
      <stop offset="0" stop-color="#b8805a"/><stop offset=".4" stop-color="#b98562"/><stop offset=".65" stop-color="#c4936a"/><stop offset=".93" stop-color="#c49468"/><stop offset=".97" stop-color="#8f6040"/><stop offset="1" stop-color="#2b140c"/>
    </linearGradient>
    <linearGradient id="sleeve" gradientUnits="userSpaceOnUse" x1="110" y1="385" x2="150" y2="475">
      <stop offset="0" stop-color="#0f4a9f"/><stop offset=".4" stop-color="#3b80d6"/><stop offset=".8" stop-color="#62a3ef"/><stop offset="1" stop-color="#5c9ceb"/>
    </linearGradient>
    <linearGradient id="cuff" gradientUnits="userSpaceOnUse" x1="168" y1="450" x2="232" y2="475">
      <stop offset="0" stop-color="#04184f" stop-opacity="0"/><stop offset=".5" stop-color="#0c3d92" stop-opacity=".75"/><stop offset="1" stop-color="#020d38"/>
    </linearGradient>
    <g id="palm">
      <path id="arm" fill="url(#sleeve)" d="M66 406Q115 388 150 368L166 358C175 400 200 435 245 446Q240 472 226 489H60V406Z"/>
      <use href="#arm" fill="none"/>
      <path fill="url(#cuff)" d="M150 368L166 358C175 400 200 435 245 446Q240 472 226 489H150Z"/>
      <path fill="url(#skin)" d="M292 404V60Q286 51 273 51Q260 53 256 68C250 110 249 150 244 190Q232 205 228 226C224 262 215 305 200 332Q185 359 161 372C168 400 190 440 238 450Q246 427 268 416Q284 412 292 404Z"/>
      <path fill="none" stroke="#9d6648" stroke-width="2" stroke-opacity=".7" d="M258 92Q262 72 275 72Q288 72 290 84M258 92Q256 140 247 192"/>
    </g>
    <symbol id="pray" viewBox="66 50 443 440">
      <use href="#palm"/><use href="#palm" transform="translate(584) scale(-1 1)"/>
    </symbol>
    <symbol id="read" viewBox="0 0 114 75">
      <path d="M5 51L26 70L78 6M51 62L60 70L109 6" fill="none" stroke="#5ab9ea" stroke-width="9" stroke-linecap="round" stroke-linejoin="round"/>
    </symbol>
    <symbol id="tail" viewBox="0 0 40 40">
      <path d="M14 0C14 20 11 32 0 39C10 41 19 39 24 34L40 20V0Z" fill="currentColor"/>
    </symbol>
  </defs>
</svg>

<main class="chat">
  <div class="day day--floating"><span>seg., 24 de fev.</span></div>

  <article class="bubble bubble--in bubble--cut w-800"><time class="meta">00:58</time><svg class="tail"><use href="#tail"/></svg></article>

  <div class="day"><span>Hoje</span></div>

  <article class="bubble bubble--in bubble--first w-222"><p>Olá</p><time class="meta">17:36</time></article>

  <article class="bubble bubble--in bubble--tall bubble--next w-711">
    <p>Passando para agradecer pelo KIT<br>CONTRATAÇÃO RÁPIDA , consegui<br>agendar a entrevista e estou<br>acreditando que vai dar tudo certo</p>
    <time class="meta">17:38</time>
    <svg class="tail"><use href="#tail"/></svg>
  </article>

  <article class="bubble bubble--out w-711">
    <p>B tarde amigo , sim sim já deu tudo<br>certo, fique tranquilo</p>
    <div class="meta"><time>17:38</time><svg class="ticks" role="img" aria-label="Lida"><use href="#read"/></svg></div>
    <svg class="tail"><use href="#tail"/></svg>
  </article>

  <article class="bubble bubble--in w-800">
    <p>Tem 2 dias que adquiri o kit e já agendei<br>minha entrevista , obg</p>
    <time class="meta">17:39</time>
    <svg class="tail"><use href="#tail"/></svg>
  </article>

  <article class="bubble bubble--out bubble--tall w-741">
    <p>Deus abençoe e bora pra cima amigo</p>
    <div class="meta"><time>17:39</time><svg class="ticks" role="img" aria-label="Lida"><use href="#read"/></svg></div>
  </article>

  <article class="reaction reaction--out">
    <svg class="emoji" role="img" aria-label="Mãos em oração"><use href="#pray"/></svg>
    <div class="stamp"><time>17:39</time><svg class="ticks" role="img" aria-label="Lida"><use href="#read"/></svg></div>
  </article>

  <article class="reaction reaction--in">
    <svg class="emoji" role="img" aria-label="Mãos em oração"><use href="#pray"/></svg>
    <div class="stamp"><time>17:40</time></div>
  </article>

  <div class="scrollbar" aria-hidden="true"></div>
</main>
</body>
</html>
```
FILE: styles.css
```css
* { box-sizing: border-box; }

body {
  margin: 0;
  height: 100vh;
  overflow: hidden;
  position: relative;
  background: #090909;
  color: #fff;
  font-family: Inter, "Liberation Sans", sans-serif;
}

.wallpaper {
  position: absolute;
  inset: 0;
  width: 100%;
  height: 100%;
  fill: none;
  stroke: #242525;
  stroke-width: 2;
  stroke-linecap: round;
  stroke-linejoin: round;
}
.wallpaper * { vector-effect: non-scaling-stroke; }
.wallpaper .solid { fill: #090909; }
.wallpaper .s circle { r: 15px; }
.wallpaper .m circle { r: 24px; }
.wallpaper .l circle { r: 32px; }
.wallpaper text {
  font-family: Inter, "Noto Sans CJK SC", sans-serif;
  font-weight: 700;
}

.sprite { position: absolute; }

.chat {
  position: relative;
  display: flex;
  flex-direction: column;
  height: 100%;
  padding: 0 41px;
}
.chat > * { flex-shrink: 0; }

.day {
  display: flex;
  justify-content: center;
  margin: 89px 0 35px;
  font-size: 32px;
  font-weight: 600;
  line-height: 46px;
}
.day span {
  min-width: 242px;
  padding: 0 23px;
  border-radius: 18px;
  background: #171717;
  text-align: center;
}
.day--floating {
  position: absolute;
  top: 18px;
  left: 0;
  right: 0;
  z-index: 1;
  margin: 0;
}

.bubble {
  position: relative;
  display: grid;
  max-width: 100%;
  margin-top: 33px;
  padding: 12px 24px 12px;
  border-radius: 26px;
}
.bubble > p,
.bubble > .meta { grid-area: 1 / 1; }
.bubble p {
  margin: 0;
  padding-bottom: 5px;
  font-size: 39px;
  line-height: 54px;
  white-space: nowrap;
}
.bubble--tall p { padding-bottom: 46px; }
.bubble--in { align-self: flex-start; background: #242626; color: #fff; }
.bubble--out { align-self: flex-end; background: #144d37; }
.bubble--cut {
  height: 45px;
  margin-top: 0;
  padding-top: 0;
  border-top-left-radius: 0;
  border-top-right-radius: 0;
}
.bubble--first { margin-top: 0; }
.bubble--next { margin-top: 12px; }

.w-222 { width: 222px; }
.w-711 { width: 711px; }
.w-741 { width: 741px; }
.w-800 { width: 800px; }

.meta {
  align-self: end;
  justify-self: end;
}
.meta, .stamp {
  display: flex;
  align-items: center;
  gap: 9px;
  color: #a5a7a7;
  font-size: 29px;
  font-variant-numeric: tabular-nums;
  line-height: 34px;
}
.bubble--out .meta,
.reaction--out .stamp { color: #9bb8ad; }

.ticks {
  width: 38px;
  height: 25px;
}

.tail {
  position: absolute;
  left: -14px;
  bottom: 0;
  width: 40px;
  height: 40px;
  color: #242626;
}
.bubble--out .tail {
  left: auto;
  right: -14px;
  color: #144d37;
  transform: scaleX(-1);
}

.reaction {
  display: flex;
  flex-direction: column;
  gap: 11px;
  margin-top: 34px;
}
.emoji {
  width: 148px;
  height: 146px;
  margin: 0 5px 0 3px;
}
.stamp {
  justify-content: flex-end;
  height: 63px;
  padding: 0 24px 2px;
  border-radius: 20px;
}
.reaction--out { align-items: flex-end; }
.reaction--out .stamp { width: 208px; background: #144d37; }
.reaction--in { align-items: flex-start; margin-top: 67px; }
.reaction--in .stamp { width: 164px; background: #242626; }

.scrollbar {
  position: absolute;
  top: 1273px;
  right: 7px;
  width: 8px;
  height: 253px;
  border-radius: 4px;
  background: rgba(160, 160, 160, .85);
}
```
